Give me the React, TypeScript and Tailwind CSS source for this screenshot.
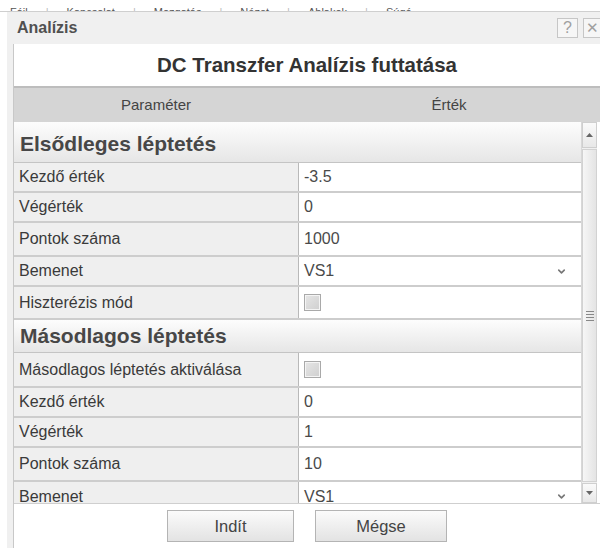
import { ChevronDown } from "lucide-react";

type Row = { label: string; kind: "text" | "select" | "check"; value?: string; h: string };

const primary: Row[] = [
  { label: "Kezdő érték", kind: "text", value: "-3.5", h: "h-[30px]" },
  { label: "Végérték", kind: "text", value: "0", h: "h-[30px]" },
  { label: "Pontok száma", kind: "text", value: "1000", h: "h-[34px]" },
  { label: "Bemenet", kind: "select", value: "VS1", h: "h-[30px]" },
  { label: "Hiszterézis mód", kind: "check", h: "h-[33px]" },
];

const secondary: Row[] = [
  { label: "Másodlagos léptetés aktiválása", kind: "check", h: "h-[35px]" },
  { label: "Kezdő érték", kind: "text", value: "0", h: "h-[30px]" },
  { label: "Végérték", kind: "text", value: "1", h: "h-[30px]" },
  { label: "Pontok száma", kind: "text", value: "10", h: "h-[34px]" },
  { label: "Bemenet", kind: "select", value: "VS1", h: "h-[31px]" },
];

const font = { fontFamily: '"Liberation Sans", Arial, sans-serif' };

const SectionHeader = ({ title, h }: { title: string; h: string }) => (
  <div
    className={`shrink-0 flex items-center pl-[6px] border-b border-[#c4c4c4] bg-gradient-to-b from-[#fdfdfd] to-[#e6e6e6] text-[21px] font-bold text-[#474747] ${h}`}
  >
    {title}
  </div>
);

const Checkbox = () => (
  <div className="w-[17px] h-[17px] border border-[#a9a9a9] bg-gradient-to-br from-[#e6e6e6] to-[#cfcfcf] shadow-[inset_0_0_0_1px_#f4f4f4]" />
);

const ParamRow = ({ row }: { row: Row }) => (
  <div className={`shrink-0 flex ${row.h} border-b-2 border-[#cdcdcd]`}>
    <div className="w-[284px] flex items-center pl-[5px] bg-[#efefef] text-[16px] text-[#3a3a3a]">
      {row.label}
    </div>
    <div className="flex-1 flex items-center border-l border-[#b9b9b9] bg-white pl-[5px] pr-[14px] text-[16px] text-[#4a4a4a]">
      {row.kind === "check" ? (
        <Checkbox />
      ) : (
        <>
          <span className="flex-1">{row.value}</span>
          {row.kind === "select" && <ChevronDown className="w-[11px] h-[11px] text-[#777]" strokeWidth={3.5} />}
        </>
      )}
    </div>
  </div>
);

const Scrollbar = () => (
  <div className="w-[16px] flex flex-col bg-[#f0f0f0] border-l border-[#d8d8d8]">
    <div className="h-[26px] flex items-center justify-center bg-gradient-to-b from-[#fafafa] to-[#e8e8e8] border border-[#cfcfcf]">
      <svg width="7" height="4" viewBox="0 0 7 4"><path d="M0 4 L3.5 0 L7 4 Z" fill="#666" /></svg>
    </div>
    <div className="flex-1 my-[1px] flex items-center justify-center bg-gradient-to-r from-[#f6f6f6] to-[#e4e4e4] border border-[#d2d2d2]">
      <div className="flex flex-col gap-[2px]">
        <div className="w-[8px] h-[1px] bg-[#888]" />
        <div className="w-[8px] h-[1px] bg-[#888]" />
        <div className="w-[8px] h-[1px] bg-[#888]" />
        <div className="w-[8px] h-[1px] bg-[#888]" />
      </div>
    </div>
    <div className="h-[20px] flex items-center justify-center bg-gradient-to-b from-[#fafafa] to-[#e8e8e8] border border-[#cfcfcf]">
      <svg width="7" height="4" viewBox="0 0 7 4"><path d="M0 0 L3.5 4 L7 0 Z" fill="#666" /></svg>
    </div>
  </div>
);

const App = () => {
  return (
    <div className="w-[600px] h-[548px] bg-white overflow-hidden flex flex-col" style={font}>
      {/* menu strip behind the dialog, mostly covered */}
      <div className="h-[12px] flex items-end gap-[18px] pl-[10px] overflow-hidden text-[11px] leading-[10px] text-[#555] border-b border-[#cfcfcf]">
        <span className="translate-y-[6px]">Fájl</span>
        <span className="translate-y-[6px] text-[#bbb]">|</span>
        <span className="translate-y-[6px]">Kapcsolat</span>
        <span className="translate-y-[6px] text-[#bbb]">|</span>
        <span className="translate-y-[6px]">Mozgatás</span>
        <span className="translate-y-[6px] text-[#bbb]">|</span>
        <span className="translate-y-[6px]">Nézet</span>
        <span className="translate-y-[6px] text-[#bbb]">|</span>
        <span className="translate-y-[6px]">Ablakok</span>
        <span className="translate-y-[6px] text-[#bbb]">|</span>
        <span className="translate-y-[6px]">Súgó</span>
      </div>

      <div className="flex-1 ml-[7px] bg-[#f0f0f0] flex flex-col">
        {/* title bar */}
        <div className="h-[32px] flex justify-between pl-[10px]">
          <span className="self-center text-[16px] font-bold text-[#505050]">Analízis</span>
          <div className="flex gap-[5px] mt-[6px]">
            <div className="w-[21px] h-[20px] border border-[#c6c6c6] bg-[#f6f6f6] flex items-center justify-center text-[16px] text-[#a0a0a0]">?</div>
            <div className="w-[17px] h-[20px] border border-r-0 border-[#c6c6c6] bg-[#f6f6f6] flex items-center justify-center text-[15px] text-[#a0a0a0]">✕</div>
          </div>
        </div>

        <div className="flex-1 ml-[6px] bg-white border-l border-[#c8c8c8] flex flex-col">
          <div className="h-[44px] flex items-center justify-center text-[20.5px] font-bold text-[#333] border-b-2 border-[#bdbdbd]">
            DC Transzfer Analízis futtatása
          </div>
          <div className="h-[34px] flex bg-[#d5d5d5] text-[15px] text-[#444]">
            <div className="w-[284px] flex items-center justify-center">Paraméter</div>
            <div className="flex-1 flex items-center justify-center">Érték</div>
          </div>

          <div className="h-[381px] flex overflow-hidden">
            <div className="w-[567px] flex flex-col">
              <SectionHeader title="Elsődleges léptetés" h="h-[41px] pt-[4px]" />
              {primary.map((r, i) => (
                <ParamRow key={i} row={r} />
              ))}
              <SectionHeader title="Másodlagos léptetés" h="h-[33px]" />
              {secondary.map((r, i) => (
                <ParamRow key={i} row={r} />
              ))}
            </div>
            <Scrollbar />
          </div>

          <div className="flex-1 flex items-center border-t border-[#cfcfcf]">
            <button className="ml-[153px] w-[127px] h-[32px] border border-[#b4b4b4] bg-gradient-to-b from-[#fbfbfb] to-[#e3e3e3] text-[16.5px] text-[#444]">
              Indít
            </button>
            <button className="ml-[21px] w-[132px] h-[32px] border border-[#b4b4b4] bg-gradient-to-b from-[#fbfbfb] to-[#e3e3e3] text-[16.5px] text-[#444]">
              Mégse
            </button>
          </div>
        </div>
      </div>
    </div>
  );
};

export default App;
